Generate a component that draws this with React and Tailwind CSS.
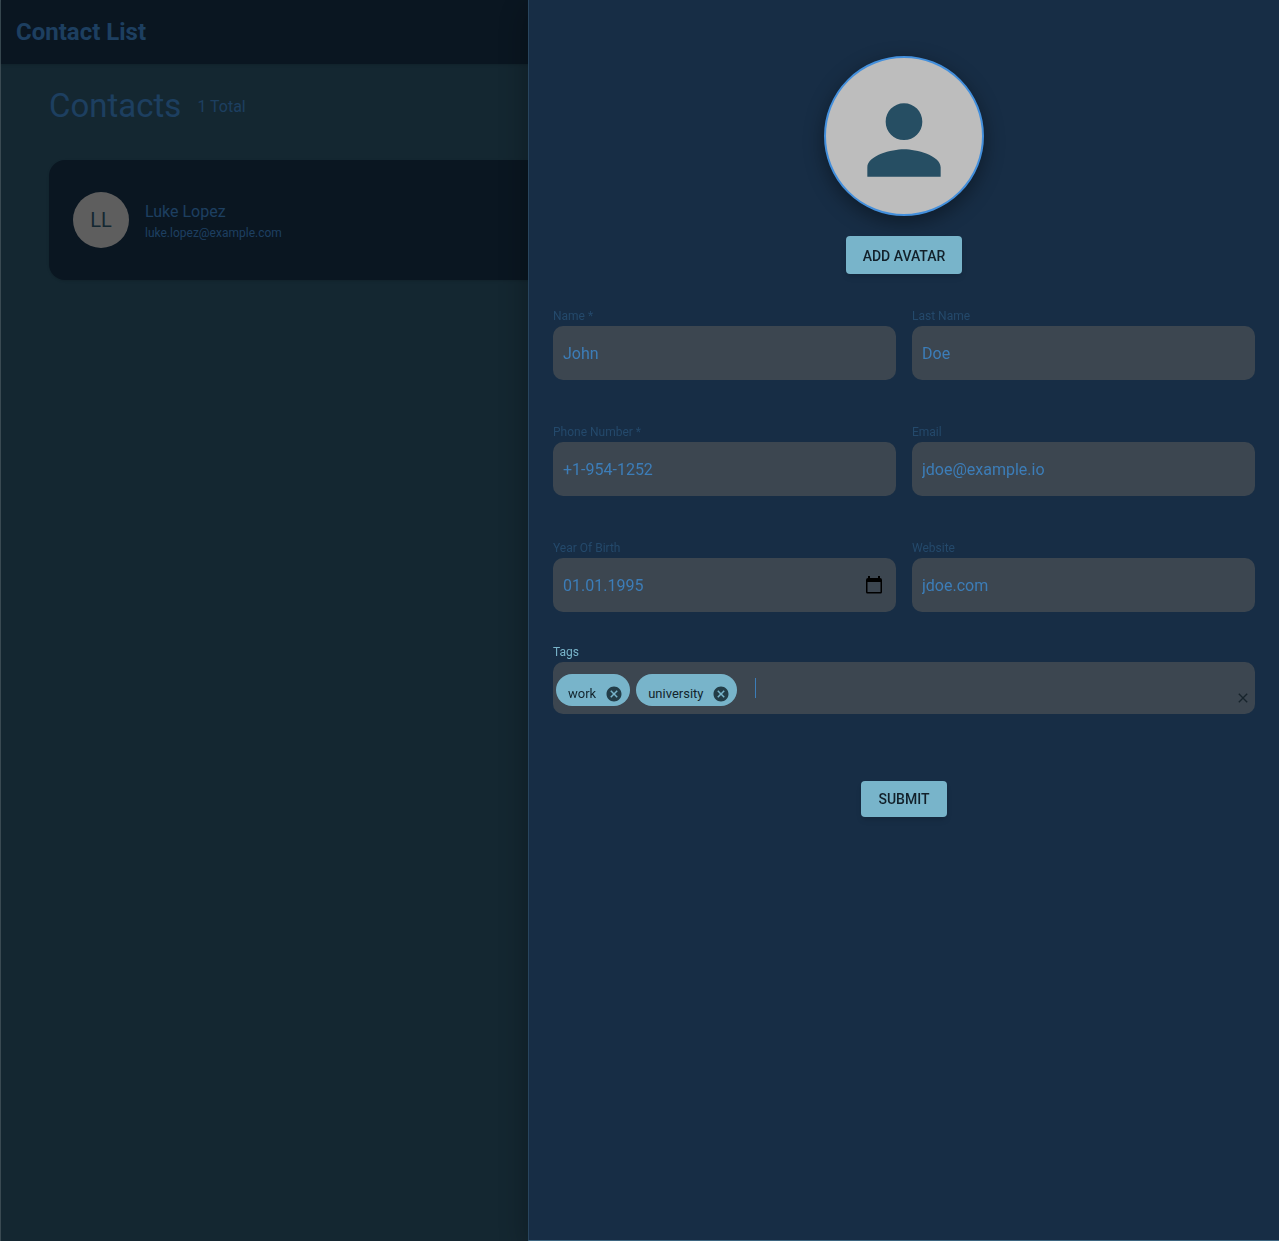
import React from "react";
import { MdPerson, MdCancel, MdClear } from "react-icons/md";

const fields = [
  { id: "name", label: "Name *", placeholder: "John" },
  { id: "lastName", label: "Last Name", placeholder: "Doe" },
  { id: "phone", label: "Phone Number *", placeholder: "+1-954-1252", type: "tel" },
  { id: "email", label: "Email", placeholder: "jdoe@example.io", type: "email" },
  { id: "birth", label: "Year Of Birth", value: "01.01.1995", calendar: true },
  { id: "website", label: "Website", placeholder: "jdoe.com" },
];

const tags = ["work", "university"];

function CalendarIcon() {
  return (
    <svg viewBox="0 0 16 18" className="h-[18px] w-4" aria-hidden="true">
      <path
        fill="currentColor"
        fillRule="evenodd"
        d="M2 0h2v2h8V0h2v2a2 2 0 0 1 2 2v12a1.500 1.500 0 0 1-1.500 1.500h-13A1.500 1.500 0 0 1 0 16V4a2 2 0 0 1 2-2zM1.500 6v10h13V6z"
      />
    </svg>
  );
}

function Field({ id, label, placeholder, value, type = "text", calendar }) {
  return (
    <div className="flex flex-col">
      <label htmlFor={id} className="text-xs leading-5 text-[#24496b]">
        {label}
      </label>
      <div className="flex h-[54px] items-center rounded-[10px] bg-[#3c4650] px-2.5">
        <input
          id={id}
          type={type}
          placeholder={placeholder}
          defaultValue={value}
          className="h-full w-full min-w-0 flex-1 bg-transparent text-base text-[#3c7db8] outline-none placeholder:text-[#3c7db8]"
        />
        {calendar && (
          <button type="button" aria-label="Open calendar" className="mr-1 text-black">
            <CalendarIcon />
          </button>
        )}
      </div>
    </div>
  );
}

function TagsField() {
  return (
    <div className="mt-[30px] flex flex-col">
      <label htmlFor="tags" className="text-xs leading-5 text-[#78b4ca]">
        Tags
      </label>
      <div className="flex h-[52px] items-center rounded-[10px] bg-[#3c4650] pr-1 pl-[3px]">
        <div className="flex gap-1.5 pt-1">
          {tags.map((tag) => (
            <span
              key={tag}
              className="flex h-8 items-center gap-[9px] rounded-full bg-[#78b4ca] pt-[7px] pr-[7px] pl-3 text-[13px] text-[#12242d]"
            >
              {tag}
              <button type="button" aria-label={"Remove " + tag} className="text-[#233d48]">
                <MdCancel className="size-[18px]" />
              </button>
            </span>
          ))}
        </div>
        <div className="ml-[18px] h-5 w-px bg-[#3c7db8]" />
        <input id="tags" type="text" className="h-full min-w-0 flex-1 bg-transparent text-base text-[#3c7db8] outline-none" />
        <button type="button" aria-label="Clear tags" className="pt-5 text-[#17242c]">
          <MdClear className="size-4" />
        </button>
      </div>
    </div>
  );
}

export default function App() {
  return (
    <div className="relative min-h-screen border-l border-[#3a4a52] bg-[#284e62] font-[Roboto,sans-serif] text-[#3a7ec0]">
      <header className="flex h-16 items-center bg-[#142c42] px-[15px] shadow-sm">
        <h1 className="text-2xl font-bold">Contact List</h1>
      </header>
      <main className="px-12 pt-5">
        <div className="flex items-center gap-4">
          <h2 className="text-[33px] leading-11">Contacts</h2>
          <p className="pt-0.5 text-base">1 Total</p>
        </div>
        <article className="mt-8 flex h-30 items-center gap-4 rounded-2xl bg-[#142c42] px-6 shadow-sm">
          <div className="flex size-14 items-center justify-center rounded-full bg-[#bdbdbd] text-xl text-[#284e62]">
            LL
          </div>
          <div className="pt-0.5">
            <p className="text-base leading-6">Luke Lopez</p>
            <p className="text-xs leading-[18px]">luke.lopez@example.com</p>
          </div>
        </article>
      </main>

      <div className="fixed inset-y-0 right-0 left-px bg-black/50" />

      <aside
        role="dialog"
        aria-label="Add contact"
        className="fixed inset-y-0 right-0 w-[751px] max-w-full overflow-y-auto border-b border-l border-b-[#3d6580] border-l-[#28455e] bg-[#172d45] px-6 pt-14 shadow-[0_8px_30px_rgba(0,0,0,0.3)]"
      >
        <form className="flex flex-col">
          <div className="flex flex-col items-center gap-5">
            <div className="flex size-40 items-center justify-center rounded-full border-2 border-[#438fdc] bg-[#bdbdbd] pt-2 text-[#264e63] shadow-[0_6px_20px_rgba(0,0,0,0.4)]">
              <MdPerson className="size-[110px]" />
            </div>
            <button
              type="button"
              className="h-[38px] rounded bg-[#78b4ca] px-[17px] pt-0.5 text-sm font-medium text-[#12202a] uppercase shadow-md"
            >
              Add avatar
            </button>
          </div>
          <div className="mt-8 grid grid-cols-2 gap-x-4 gap-y-[42px]">
            {fields.map((field) => (
              <Field key={field.id} {...field} />
            ))}
          </div>
          <TagsField />
          <button
            type="submit"
            className="mt-[67px] h-9 self-center rounded bg-[#78b4ca] px-[17px] text-sm font-medium text-[#12202a] uppercase shadow-md"
          >
            Submit
          </button>
        </form>
      </aside>
    </div>
  );
}
